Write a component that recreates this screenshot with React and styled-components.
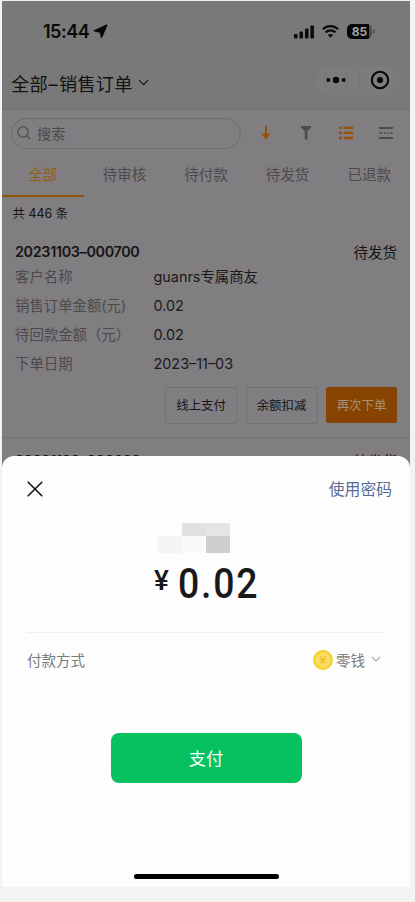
import React from "react";
import styled, { createGlobalStyle } from "styled-components";

const GlobalStyle = createGlobalStyle`
  * { box-sizing: border-box; }
  body {
    margin: 0;
    background: #f3f3f3;
    font-family: Inter, "Noto Sans CJK SC", sans-serif;
  }
`;

const Phone = styled.main`
  position: relative;
  width: 408px;
  height: 886px;
  margin: 1px 0 0 2px;
  overflow: hidden;
  background: #807e80;
`;

const Header = styled.header`
  height: 109px;
  background: #797979;
  border-bottom: 1px solid #747475;
`;

const StatusBar = styled.div`
  display: flex;
  justify-content: space-between;
  align-items: center;
  height: 61px;
  padding: 0 35px 0 41px;
`;

const Clock = styled.div`
  display: flex;
  align-items: center;
  gap: 4px;
  color: #090909;
  font-size: 18px;
  font-weight: 600;
  letter-spacing: -0.5px;
`;

const StatusIcons = styled.div`
  display: flex;
  align-items: center;
  gap: 8px;
`;

const Battery = styled.div`
  display: flex;
  align-items: center;
`;

const BatteryBody = styled.div`
  width: 25px;
  height: 15px;
  border-radius: 5px;
  background: linear-gradient(90deg, #060606 22px, #505050 22px);
  color: #a3a3a3;
  font-size: 12px;
  font-weight: 700;
  line-height: 15px;
  text-align: center;
`;

const BatteryTip = styled.div`
  width: 2px;
  height: 5px;
  margin-left: 1px;
  border-radius: 0 3px 3px 0;
  background: #555;
`;

const NavBar = styled.div`
  display: flex;
  justify-content: space-between;
  align-items: center;
  height: 44px;
  padding: 0 10px 8px 9px;
`;

const PageTitle = styled.h1`
  display: flex;
  align-items: center;
  gap: 5px;
  margin: 6px 0 0;
  color: #121212;
  font-size: 18.2px;
  font-weight: 400;
  letter-spacing: 0.3px;
`;

const TitleDash = styled.span`
  margin: 0 1px 0 0.5px;
`;

const Capsule = styled.div`
  display: flex;
  width: 84px;
  height: 29px;
  border-radius: 15px;
  background: #7c7c7c;
`;

const CapsuleHalf = styled.div`
  display: flex;
  flex: 1;
  align-items: center;
  justify-content: center;
  &:first-child { padding-right: 3px; }
  & + & { border-left: 1px solid #777; }
`;

const Tools = styled.div`
  display: flex;
  align-items: center;
  height: 46px;
  padding: 1px 4px 0 9px;
`;

const SearchBox = styled.div`
  display: flex;
  align-items: center;
  gap: 6px;
  width: 230px;
  height: 31px;
  margin-right: 5px;
  padding: 0 0 2px 5px;
  border: 1px solid #6d6c6e;
  border-radius: 16px;
  color: #4b4a4c;
  font-size: 14.2px;
`;

const ToolButton = styled.div`
  display: flex;
  flex: 1;
  justify-content: center;
  height: 28px;
  padding-top: 5px;
`;

const Tabs = styled.nav`
  display: flex;
  height: 41px;
`;

const Tab = styled.div`
  flex: 1;
  border-bottom: 2px solid ${(p) => (p.$active ? "#8c5608" : "transparent")};
  color: ${(p) => (p.$active ? "#92600b" : "#4b4a4c")};
  font-size: 14.5px;
  line-height: 38px;
  text-align: center;
`;

const Count = styled.div`
  height: 43px;
  padding-left: 10.5px;
  color: #151416;
  font-size: 12.4px;
  line-height: 33px;
`;

const OrderHead = styled.div`
  display: flex;
  justify-content: space-between;
  align-items: center;
  height: 22px;
  padding: 0 13px;
  color: #151416;
  font-size: 14.5px;
`;

const OrderId = styled.span`
  font-size: 14.3px;
  font-weight: 600;
  letter-spacing: -0.3px;
`;

const Field = styled.div`
  display: grid;
  grid-template-columns: 138.5px 1fr;
  height: 29px;
  padding: 0 13px;
  font-size: 14.4px;
  line-height: 29px;
`;

const Label = styled.span`
  color: #4c4a4d;
  white-space: nowrap;
`;

const Value = styled.span`
  color: #1a191b;
`;

const Actions = styled.div`
  display: flex;
  justify-content: flex-end;
  align-items: center;
  gap: 8.5px;
  height: 60px;
  padding: 0 13px 5px;
  border-bottom: 1px solid #747274;
`;

const ActionButton = styled.button`
  width: ${(p) => (p.$primary ? 71 : 72)}px;
  height: ${(p) => (p.$primary ? 36 : 37)}px;
  padding: 0 0 1px;
  border: 1px solid ${(p) => (p.$primary ? "#824409" : "#737173")};
  border-radius: 2px;
  background: ${(p) => (p.$primary ? "#864400" : "transparent")};
  color: ${(p) => (p.$primary ? "#a99078" : "#151416")};
  font-family: inherit;
  font-size: 12.4px;
`;

const NextOrder = styled.div`
  padding-top: 11px;
`;

const Sheet = styled.section`
  position: absolute;
  inset: 455px 0 0;
  display: flex;
  flex-direction: column;
  align-items: center;
  border-radius: 12px 12px 0 0;
  background: #fdfdfd;
`;

const SheetHeader = styled.div`
  display: flex;
  justify-content: space-between;
  align-items: center;
  width: 100%;
  height: 66px;
  padding: 0 18px 0 25px;
`;

const PasswordLink = styled.span`
  margin-top: 1px;
  color: #576b95;
  font-size: 15.8px;
  line-height: 22px;
`;

const Mosaic = styled.div`
  display: grid;
  grid-template-columns: repeat(3, 24px);
  grid-template-rows: 13px 17px;
  margin: 1px 24px 0 0;
`;

const MosaicCell = styled.div`
  background: ${(p) => p.$tone};
`;

const Amount = styled.div`
  display: flex;
  align-items: flex-start;
  width: 106px;
  height: 79px;
  padding-top: 11px;
  color: #19191b;
  font-family: Roboto, sans-serif;
  font-weight: 500;
`;

const Currency = styled.span`
  flex: none;
  width: 25px;
  padding-left: 1px;
  font-size: 28px;
  line-height: 34px;
`;

const Digits = styled.span`
  flex: none;
  font-size: 43px;
  line-height: 39px;
  letter-spacing: 2px;
  transform: scaleX(0.87);
  transform-origin: 0 50%;
`;

const PayMethod = styled.div`
  display: flex;
  justify-content: space-between;
  align-items: center;
  width: 358px;
  height: 56px;
  padding-bottom: 2px;
  border-top: 1px solid #f1f1f1;
  color: #7b7b7b;
  font-size: 14.5px;
`;

const Wallet = styled.div`
  display: flex;
  align-items: center;
  padding-right: 4px;
`;

const WalletName = styled.span`
  margin: 0 6px 0 3px;
`;

const PayButton = styled.button`
  width: 191px;
  height: 50px;
  margin-top: 45px;
  padding: 0 0 2px;
  border: 0;
  border-radius: 8px;
  background: #07c160;
  color: #f4fff8;
  font-family: inherit;
  font-size: 17.3px;
`;

const HomeIndicator = styled.div`
  width: 145px;
  height: 5px;
  margin: auto 0 8.5px;
  border-radius: 3px;
  background: #000;
`;

const Chevron = ({ color, width = 11 }) => (
  <svg width={width} height={width * 0.65} viewBox="0 0 11 7" fill="none" stroke={color} strokeWidth="1.2">
    <path d="M1 1l4.5 4.5L10 1" />
  </svg>
);

const tabs = ["全部", "待审核", "待付款", "待发货", "已退款"];
const fields = [
  ["客户名称", "guanrs专属商友"],
  ["销售订单金额(元)", "0.02"],
  ["待回款金额（元）", "0.02"],
  ["下单日期", "2023–11–03"],
];
const tones = ["#fdfdfd", "#e1e1e1", "#e5e5e5", "#f5f5f5", "#fafafa", "#cfcfcf"];

export default function App() {
  return (
    <>
      <GlobalStyle />
      <Phone>
        <Header>
          <StatusBar>
            <Clock>
              15:44
              <svg width="15" height="15" viewBox="0 0 15 15">
                <path d="M13.7 1.2L8.6 13.2 7.2 8 1.4 6.8Z" fill="#090909" stroke="#090909" strokeWidth="1.4" strokeLinejoin="round" />
              </svg>
            </Clock>
            <StatusIcons>
              <svg width="20" height="14" viewBox="0 0 20 14" fill="#0b0b0b">
                <rect x="0" y="9" width="3.5" height="4.5" rx="1" />
                <rect x="5.5" y="6.5" width="3.5" height="7" rx="1" />
                <rect x="11" y="3.5" width="3.5" height="10" rx="1" />
                <rect x="16.4" y=".5" width="3.5" height="13" rx="1" />
              </svg>
              <svg width="17" height="13" viewBox="0 0 17 13" fill="none" stroke="#0b0b0b" strokeWidth="2.2">
                <path d="M.8 4.3C5.2.1 11.8.1 16.2 4.3M3.6 7.4c2.8-2.6 7-2.6 9.8 0" />
                <path d="M8.5 12.8L5.9 10.1c1.5-1.4 3.7-1.4 5.2 0Z" fill="#0b0b0b" stroke="none" />
              </svg>
              <Battery>
                <BatteryBody>85</BatteryBody>
                <BatteryTip />
              </Battery>
            </StatusIcons>
          </StatusBar>
          <NavBar>
            <PageTitle>
              <span>全部<TitleDash>–</TitleDash>销售订单</span>
              <Chevron color="#161616" />
            </PageTitle>
            <Capsule>
              <CapsuleHalf>
                <svg width="20" height="8" viewBox="0 0 20 8" fill="#080808">
                  <circle cx="2.3" cy="4" r="2" />
                  <circle cx="10" cy="4" r="3.2" />
                  <circle cx="17.7" cy="4" r="2" />
                </svg>
              </CapsuleHalf>
              <CapsuleHalf>
                <svg width="20" height="20" viewBox="0 0 20 20">
                  <circle cx="10" cy="10" r="8.2" fill="none" stroke="#080808" strokeWidth="2.1" />
                  <circle cx="10" cy="10" r="3.1" fill="#080808" />
                </svg>
              </CapsuleHalf>
            </Capsule>
          </NavBar>
        </Header>

        <Tools>
          <SearchBox>
            <svg width="14" height="14" viewBox="0 0 14 14" fill="none" stroke="#474648" strokeWidth="1.1">
              <circle cx="6" cy="6" r="5.2" />
              <path d="M9.7 9.7l3.4 3.4" />
            </svg>
            搜索
          </SearchBox>
          <ToolButton>
            <svg width="12" height="16" viewBox="0 0 12 16">
              <path d="M6 1v9" stroke="#974e07" strokeWidth="2" />
              <path d="M1.3 8.5h9.4L6 14.4Z" fill="#974e07" />
            </svg>
          </ToolButton>
          <ToolButton>
            <svg width="12" height="16" viewBox="0 0 12 16" fill="#4b4a4c">
              <path d="M1 1h10v1.4L7.4 6v8.4H4.8V6L1 2.4Z" />
            </svg>
          </ToolButton>
          <ToolButton>
            <svg width="16" height="16" viewBox="0 0 16 16" stroke="#974e07" strokeWidth="2.3">
              <path d="M1 2.8h3M5.7 2.8H15M1 7.9h3M5.7 7.9H15M1 13h3M5.7 13H15" />
            </svg>
          </ToolButton>
          <ToolButton>
            <svg width="16" height="16" viewBox="0 0 16 16" stroke="#4b4a4c" strokeWidth="2">
              <path d="M1 3h14M1 13h14" />
              <path d="M1.5 8h3M6 8h1.5M9 8h1.5M12 8h2.5" strokeWidth="1.6" />
            </svg>
          </ToolButton>
        </Tools>

        <Tabs>
          {tabs.map((name, i) => (
            <Tab key={name} $active={i === 0}>{name}</Tab>
          ))}
        </Tabs>

        <Count>共 446 条</Count>

        <OrderHead>
          <OrderId>20231103–000700</OrderId>
          <span>待发货</span>
        </OrderHead>
        {fields.map(([label, value]) => (
          <Field key={label}>
            <Label>{label}</Label>
            <Value>{value}</Value>
          </Field>
        ))}
        <Actions>
          <ActionButton>线上支付</ActionButton>
          <ActionButton>余额扣减</ActionButton>
          <ActionButton $primary>再次下单</ActionButton>
        </Actions>
        <NextOrder>
          <OrderHead>
            <OrderId>20231103–000699</OrderId>
            <span>待发货</span>
          </OrderHead>
        </NextOrder>

        <Sheet>
          <SheetHeader>
            <svg width="16" height="16" viewBox="0 0 16 16" stroke="#17171b" strokeWidth="1.6" strokeLinecap="round">
              <path d="M1.2 1.2l13.6 13.6M14.8 1.2L1.2 14.8" />
            </svg>
            <PasswordLink>使用密码</PasswordLink>
          </SheetHeader>
          <Mosaic>
            {tones.map((tone, i) => (
              <MosaicCell key={i} $tone={tone} />
            ))}
          </Mosaic>
          <Amount>
            <Currency>¥</Currency>
            <Digits>0.02</Digits>
          </Amount>
          <PayMethod>
            <span>付款方式</span>
            <Wallet>
              <svg width="20" height="20" viewBox="0 0 20 20">
                <circle cx="10" cy="10" r="9" fill="#fadc63" stroke="#f6cf20" strokeWidth="1.8" />
                <path d="M7 6.3l3 3 3-3M7 10h6M7 12.3h6M10 9.3v4" fill="none" stroke="#efc335" strokeWidth="1.3" />
              </svg>
              <WalletName>零钱</WalletName>
              <Chevron color="#a0a0a0" width={10} />
            </Wallet>
          </PayMethod>
          <PayButton>支付</PayButton>
          <HomeIndicator />
        </Sheet>
      </Phone>
    </>
  );
}
